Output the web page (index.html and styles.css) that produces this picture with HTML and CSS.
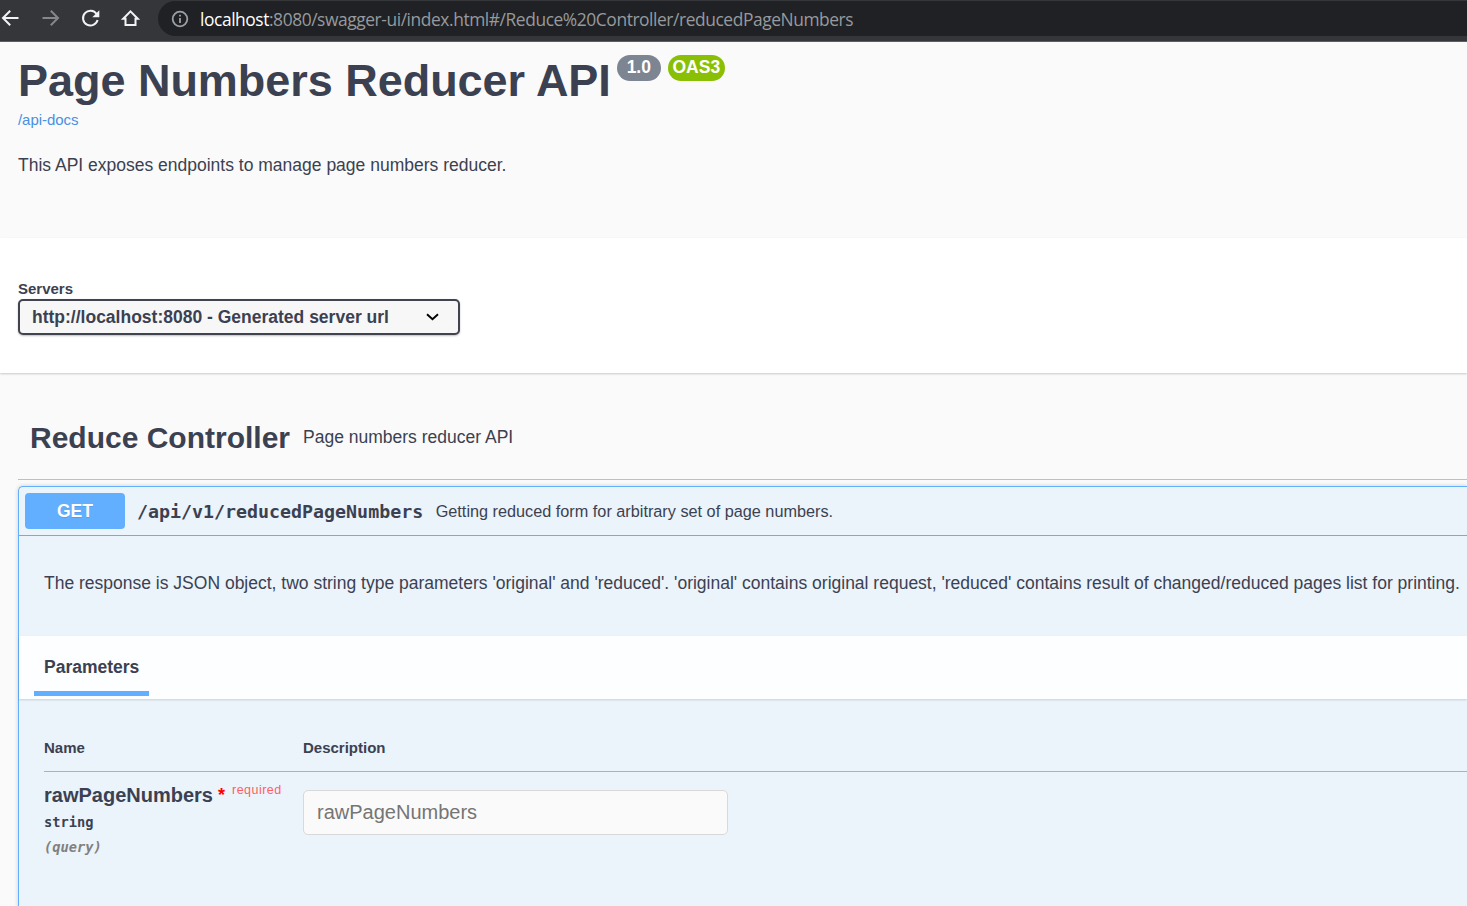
FILE: index.html
```
<!DOCTYPE html>
<html lang="en">
<head>
<meta charset="utf-8">
<title>Page Numbers Reducer API</title>
<link rel="stylesheet" href="styles.css">
</head>
<body>
<header class="browser-bar">
  <svg class="nav-icon" viewBox="0 0 20 20"><path d="M18.500 10H3M10.200 2.800L3 10l7.200 7.200"/></svg>
  <svg class="nav-icon nav-icon-disabled" viewBox="0 0 20 20"><path d="M2.500 10H18M10.800 2.800L18 10l-7.200 7.200"/></svg>
  <svg class="nav-icon" viewBox="0 0 20 20"><path d="M16.600 6A7.400 7.400 0 1 0 17.600 12"/><path class="solid" d="M19.300 2.200v7h-7z"/></svg>
  <svg class="nav-icon" viewBox="0 0 20 20"><path d="M3.200 10.700L10.500 3.300l7.300 7.400h-2.300V17h-10v-6.300z"/></svg>
  <div class="address">
    <svg class="info-icon" viewBox="0 0 18 18"><circle cx="9" cy="9" r="7.300"/><path d="M9 8v5M9 4.800v1.800"/></svg>
    <span class="url"><span class="host">localhost</span>:8080/swagger-ui/index.html#/Reduce%20Controller/reducedPageNumbers</span>
  </div>
</header>
<main>
  <section class="info">
    <div class="title-row">
      <h1 class="title">Page Numbers Reducer API</h1>
      <span class="badge version">1.0</span>
      <span class="badge oas">OAS3</span>
    </div>
    <a class="docs-link">/api-docs</a>
    <p class="intro">This API exposes endpoints to manage page numbers reducer.</p>
  </section>
  <section class="servers">
    <span class="servers-label">Servers</span>
    <div class="select">
      <span class="select-text">http://localhost:8080 - Generated server url</span>
      <svg class="chevron" viewBox="0 0 14 10"><path d="M2 2.200L7.500 7.300 13 2.200"/></svg>
    </div>
  </section>
  <section class="tag">
    <div class="tag-head">
      <h2 class="tag-name">Reduce Controller</h2>
      <span class="tag-desc">Page numbers reducer API</span>
    </div>
    <article class="operation">
      <div class="summary">
        <span class="method">GET</span>
        <span class="path">/api/v1/reducedPageNumbers</span>
        <span class="summary-text">Getting reduced form for arbitrary set of page numbers.</span>
      </div>
      <div class="description"><span class="description-text">The response is JSON object, two string type parameters 'original' and 'reduced'. 'original' contains original request, 'reduced' contains result of changed/reduced pages list for printing.</span></div>
      <div class="tabs"><span class="tab">Parameters</span></div>
      <div class="params">
        <div class="params-head"><span>Name</span><span>Description</span></div>
        <div class="params-row">
          <div>
            <div class="param-name"><span class="name-text">rawPageNumbers</span><span class="star">*</span><span class="required">required</span></div>
            <div class="param-type">string</div>
            <div class="param-in">(query)</div>
          </div>
          <input class="param-input" placeholder="rawPageNumbers">
        </div>
      </div>
    </article>
  </section>
</main>
</body>
</html>
```
FILE: styles.css
```
* { box-sizing: border-box; }
body {
  margin: 0;
  height: 906px;
  overflow: hidden;
  background: #fafafa;
  color: #3b4151;
  font-family: "Liberation Sans", Arial, sans-serif;
  white-space: nowrap;
}
.browser-bar {
  display: flex;
  align-items: flex-start;
  height: 42px;
  padding-top: 1px;
  background: #35363a;
  border-bottom: 1px solid #5b5f63;
}
.nav-icon {
  flex: none;
  width: 20px;
  height: 20px;
  margin: 7px 20px 0 0;
  fill: none;
  stroke: #f1f3f4;
  stroke-width: 2;
}
.nav-icon-disabled { stroke: #85878a; }
.nav-icon .solid { fill: #f1f3f4; stroke: none; }
.address {
  display: flex;
  align-items: center;
  flex: 1;
  height: 35px;
  margin-left: -2px;
  padding-left: 13px;
  background: #202124;
  border-radius: 18px 0 0 18px;
}
.info-icon {
  width: 18px;
  height: 18px;
  fill: none;
  stroke: #9aa0a6;
  stroke-width: 1.800;
}
.url {
  margin-left: 11px;
  color: #969a9e;
  font: 17.400px/24px "Open Sans", sans-serif;
  letter-spacing: -0.430px;
}
.host { color: #fff; }
.info { height: 196px; padding: 12px 18px 0; }
.title-row { display: flex; height: 56px; }
.title { margin: 0; font-size: 45px; line-height: 54px; letter-spacing: -0.030px; }
.badge {
  height: 26px;
  margin-top: 1px;
  border-radius: 13px;
  color: #fff;
  font-size: 17.500px;
  font-weight: bold;
  line-height: 25px;
  text-align: center;
}
.version { width: 44px; margin-left: 6px; background: #7d8492; }
.oas { width: 57px; margin-left: 7px; background: #89bf04; }
.docs-link { display: block; color: #4990e2; font-size: 15px; line-height: 20px; letter-spacing: -0.050px; }
.intro { margin: 24px 0 0; font-size: 17.500px; line-height: 22px; }
.servers {
  display: flex;
  flex-direction: column;
  align-items: flex-start;
  height: 135px;
  padding: 42px 18px 0;
  background: #fff;
  box-shadow: 0 1px 2px rgba(0, 0, 0, .2);
}
.servers-label { font-size: 15px; font-weight: bold; line-height: 18px; }
.select {
  display: flex;
  align-items: center;
  justify-content: space-between;
  width: 442px;
  height: 36px;
  margin-top: 1px;
  padding: 0 19px 0 12px;
  border: 2px solid #41444e;
  border-radius: 5px;
  background: #f7f7f7;
  box-shadow: 0 1px 2px rgba(0, 0, 0, .25);
  font-size: 17.500px;
  font-weight: bold;
}
.chevron { width: 14px; height: 10px; fill: none; stroke: #000; stroke-width: 1.900; }
.tag { padding-left: 18px; }
.tag-head {
  display: flex;
  align-items: center;
  height: 107px;
  padding: 23px 0 0 12px;
  border-bottom: 1px solid #bdbfc3;
}
.tag-name { margin: 0; font-size: 30px; line-height: 38px; }
.tag-desc { margin-left: 13px; font-size: 17.500px; }
.operation {
  height: 430px;
  margin-top: 6px;
  border: 1px solid #61affe;
  border-width: 1px 0 0 1px;
  border-radius: 5px 0 0;
  background: #ebf3fb;
  box-shadow: 0 0 4px rgba(0, 0, 0, .19);
}
.summary {
  display: flex;
  align-items: center;
  height: 49px;
  padding-left: 6px;
  border-bottom: 1px solid #61affe;
}
.method {
  width: 100px;
  height: 36px;
  border-radius: 4px;
  background: #61affe;
  color: #fff;
  font-size: 17.500px;
  font-weight: bold;
  line-height: 36px;
  text-align: center;
  text-shadow: 0 1px 0 rgba(0, 0, 0, .1);
}
.path {
  margin-left: 12px;
  padding-top: 2px;
  font: bold 18.300px/24px "DejaVu Sans Mono", monospace;
}
.summary-text { margin-left: 12.500px; font-size: 16.250px; }
.description { height: 100px; padding: 36px 0 0 25px; font-size: 17.500px; line-height: 22px; }
.tabs {
  height: 63px;
  padding-left: 15px;
  background: rgba(255, 255, 255, .88);
  box-shadow: 0 1px 2px rgba(0, 0, 0, .15);
}
.tab {
  display: block;
  width: 115px;
  height: 60px;
  padding-left: 10px;
  border-bottom: 5px solid #61affe;
  font-size: 17.500px;
  font-weight: bold;
  line-height: 63px;
}
.params { padding: 33px 0 0 25px; }
.params-head {
  display: grid;
  grid-template-columns: 259px 1fr;
  height: 40px;
  border-bottom: 1px solid #a9b3c0;
  font-size: 15px;
  font-weight: bold;
  line-height: 31px;
}
.params-row { display: grid; grid-template-columns: 259px 1fr; padding-top: 10px; }
.param-name { display: flex; height: 28px; line-height: 26px; }
.name-text { font-size: 20px; font-weight: bold; }
.star { margin-left: 5px; color: #f00; font-size: 18px; font-weight: bold; line-height: 26px; }
.required { margin-left: 7px; color: #ff5f5f; font-size: 12.500px; line-height: 16px; letter-spacing: .480px; }
.param-type { font: bold 13.700px/24px "DejaVu Sans Mono", monospace; }
.param-in { color: #808080; font: italic bold 13.700px/26px "DejaVu Sans Mono", monospace; }
.param-input {
  width: 425px;
  height: 45px;
  margin-top: 8px;
  padding: 0 13px;
  border: 1px solid #d9d9d9;
  border-radius: 5px;
  background: #fafafa;
  font: 20px "Liberation Sans", Arial, sans-serif;
}
.param-input::placeholder { color: #757575; }
```
